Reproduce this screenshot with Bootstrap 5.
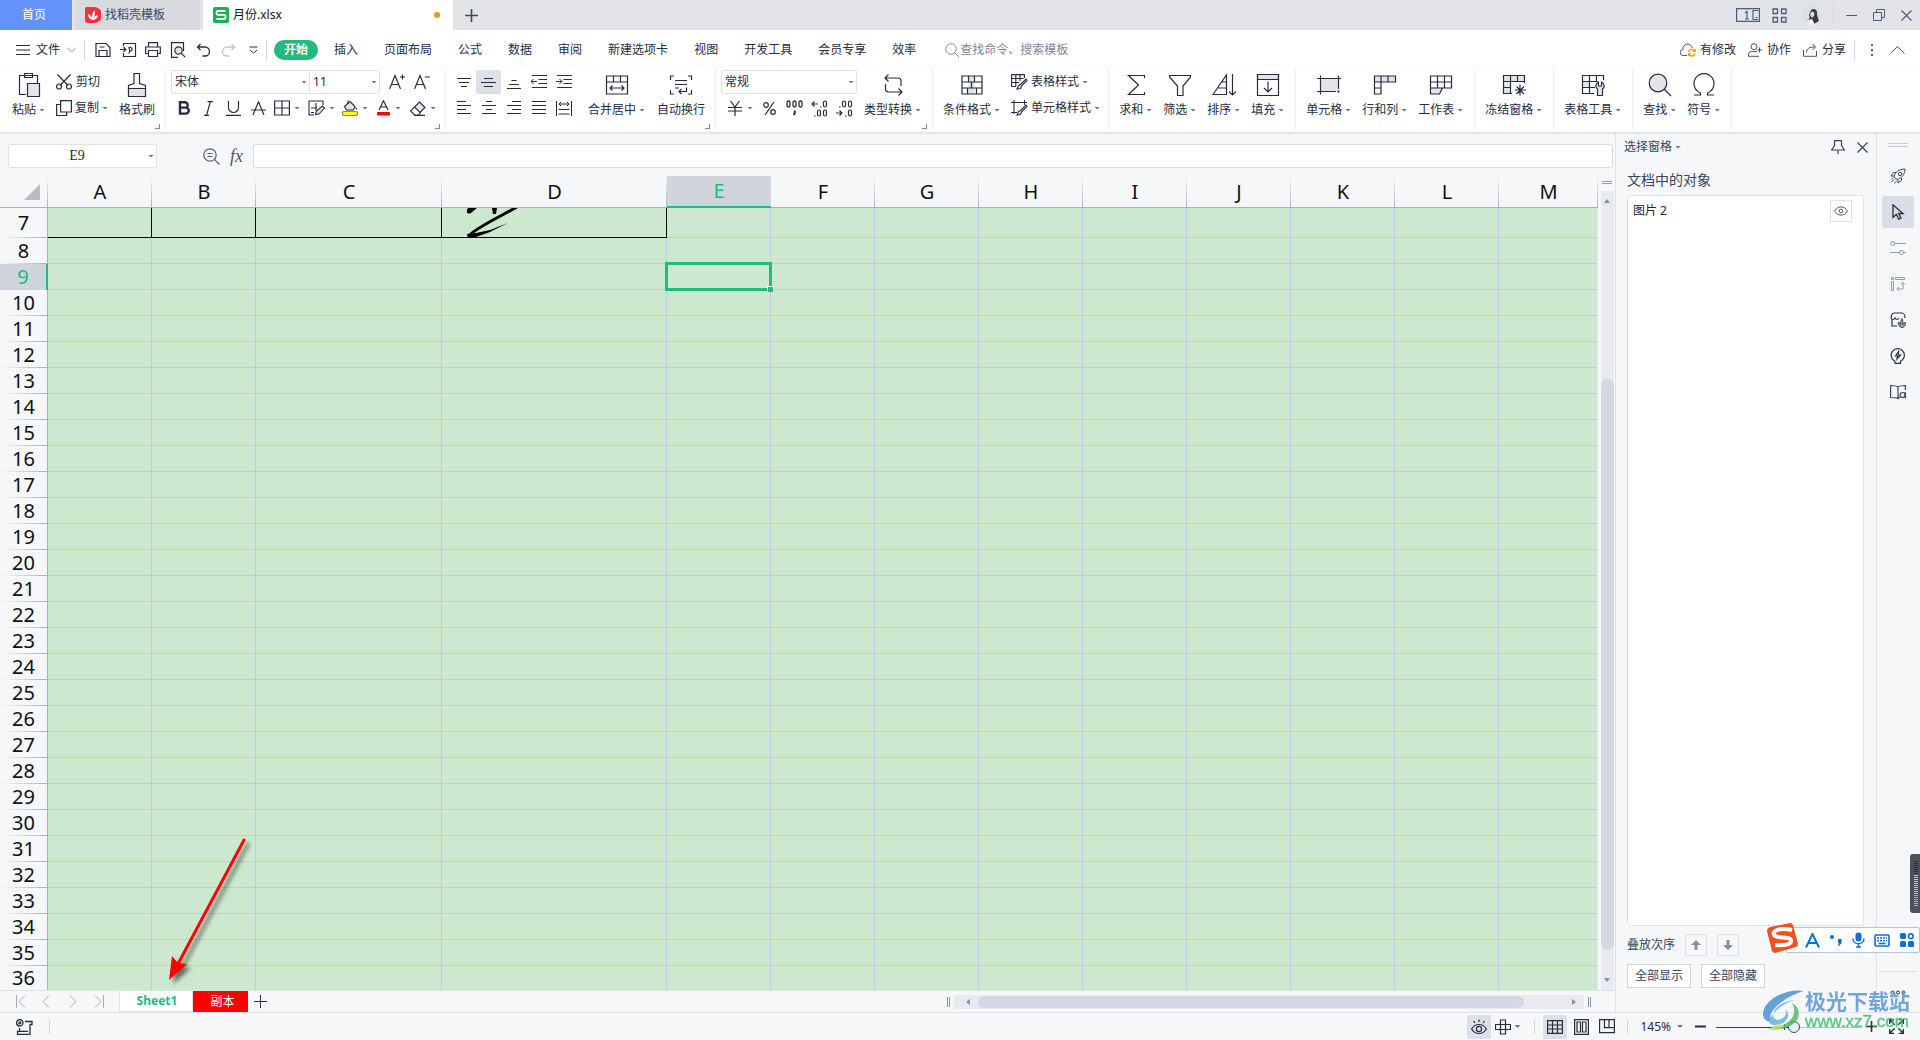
<!DOCTYPE html>
<html lang="zh-CN">
<head>
<meta charset="utf-8">
<meta name="viewport" content="width=device-width, initial-scale=1">
<title>月份.xlsx</title>
<link href="https://cdn.jsdelivr.net/npm/bootstrap@5.3.0/dist/css/bootstrap.min.css" rel="stylesheet">
<style>
:root{--ink:#262d40;--line:#e0e2e8;--bg:#f5f7f9;--green:#21bb7e;--head:#d1d4dc;--rule:#a9b0c6}
html{height:100%;overflow:hidden}
body{font:12px/16px "Noto Sans","Noto Sans CJK SC",sans-serif;color:var(--ink);background:var(--bg);height:100%;overflow:hidden}
button,select,input{font:inherit;color:inherit}
button{border:0;background:none;padding:0;display:flex;align-items:center;white-space:nowrap}
svg{display:block;flex:none}
svg:not([stroke]){stroke:currentColor}
svg:not([fill]){fill:none}
.tri{flex:none;width:6px;height:3px;background:#6b7691;clip-path:polygon(0 0,100% 0,50% 100%)}
/* title bar */
.titlebar{height:30px;flex:none;background:#e2e4e8}
.wtab{height:30px;color:#3f485c}
.wtab-home{width:72px;background:#6492fb;color:#fff;justify-content:center;padding-right:4px}
.wtab-tpl{width:125px;background:#d8dade;padding-left:10px;gap:4px;margin:0 3px}
.wtab-doc{width:250px;background:#fff;padding:0 13px 0 10px;gap:4px;color:#111}
.dirty{width:6px;height:6px;border-radius:50%;background:#e79b08}
.winbtns{color:#4d5c7d}
.avatar-dot{width:20px;height:20px;border-radius:50%;overflow:hidden;margin:0 8px 0 14px}
.vsep{width:1px;height:20px;background:#d3d6dc;flex:none}
/* menu */
.menubar{height:37px;flex:none;background:#fff;padding:3px 15px 0 16px}
.filebtn{gap:6px}
.quick{gap:9px;margin:0 5px 0 10px}
.quick button{width:16px;justify-content:center}
.mtab{padding:0 13px;height:20px}
.mtab.on{background:var(--green);color:#fff;font-weight:700;border-radius:10px;padding:0 10px;margin:0 3px}
.finder{border:0;outline:0;background:none;width:140px;padding:0}
.finder::placeholder{color:#7a869f;opacity:1}
/* ribbon */
.ribbon{background:#fff;height:65px;flex:none;padding-top:1px;box-shadow:0 1px 3px #0002;z-index:2}
.rgroup{height:62px;border-right:1px solid #eceef1;padding:2px 11px 0 10px;gap:11px}
.g-clip{padding-left:12px;padding-right:10px}
.g-font{padding-left:5px;padding-right:4px}
.g-align{padding-left:5px;padding-right:10px;gap:12px}
.g-number{padding-left:5px;gap:7px}
.bigbtn{flex-direction:column;padding-top:3px;gap:5px}
.cap{gap:3px}
.rrow{height:24px}
.rrow + .rrow,.pick + .rrow{margin-top:2px}
.tool{width:25px;height:24px;justify-content:center;border-radius:2px}
.tool.on{background:#dde1e7}
.dtool{width:34px;height:24px;padding-left:3px;gap:4px}
.money{width:36px;padding-left:7px;gap:5px}
.corner{position:absolute;right:5px;bottom:1px;width:5px;height:5px;border:solid #7f889c;border-width:0 1px 1px 0}
.pick{height:24px;border:1px solid #dfe1e6;border-radius:2px;background:#fff}
.pick select,.pick input{border:0;outline:0;appearance:none;background:none;padding:0 3px;width:100%;height:22px}
.pick .tri{margin:0 2px 0 -8px}
.fontname{width:139px;border-radius:2px 0 0 2px}
.fontsize{width:71px;border-radius:0 2px 2px 0;margin-left:-1px}
/* formula bar */
.fbar{height:44px;flex:none;padding:0 2px 0 8px}
.namebox{width:149px;margin-right:46px}
.namebox input{font-family:"Liberation Serif",serif;font-size:14px;text-align:center;padding-right:14px}
.formula{height:24px;border:1px solid #d9dce2;border-radius:2px;background:#fff;outline:0}
.fxi{font:italic 18px/20px "Liberation Serif",serif;color:#4c566c;width:23px;margin-left:10px}
/* grid */
.gridbox{min-height:0;overflow:hidden}
.cells{table-layout:fixed;border-collapse:separate;border-spacing:0;width:100%}
.cells td{background:#cce8cf;border:solid #c3cadb;border-width:0 1px 1px 0;padding:0;height:26px}
.cells tr.tall td,.cells tr.tall th{height:30px}
.cells th{font-size:20px;line-height:24px;font-weight:400;text-align:center;color:#111;padding:0}
.cells thead th{height:32px;border-bottom:1px solid var(--rule);background:linear-gradient(#0000,var(--rule)) right/1px 100% no-repeat}
.cells tbody th{height:26px;border-right:1px solid var(--rule);background:linear-gradient(90deg,#0000,var(--rule)) bottom/100% 1px no-repeat}
.cells thead th.cur{background:var(--head);color:var(--green);border-bottom:2px solid var(--green)}
.cells tbody th.cur{background:var(--head);color:var(--green);border-right:2px solid var(--green)}
.cells tbody tr:last-child>*{height:24px;border-bottom:0}
.cells tbody tr:last-child th{background:none}
.cells td.boxed{border-color:#000}
.cells td.pic{position:relative}
.pic svg{position:absolute;left:22px;top:0}
.cells td.sel{position:relative}
.sel::before{content:"";position:absolute;inset:-2px;border:3px solid var(--green)}
.sel::after{content:"";position:absolute;right:-3px;bottom:-3px;width:6px;height:6px;background:var(--green);border:solid #fff;border-width:1px 0 0 1px}
.cells td:last-child,.cells thead th:last-child{border-right-color:#e3e5ea}
.vbar{width:17px;flex:none;padding:5px 1px 0 3px}
.track{background:#e9eaf0}
.thumb{background:#d5d8e0;border-radius:7px}
.grip{height:3px;border:solid #98a2b4;border-width:1px 0}
.vgrip{width:10px;flex:none;align-self:center;margin-bottom:7px}
.grip2{width:3px;height:10px;border:solid #8a95aa;border-width:0 1px}
/* sheet tabs */
.tabsbar{height:22px;flex:none;border-top:1px solid var(--line);padding-right:24px}
.navs{width:119px;padding-left:16px;gap:16px;color:#a9adb8}
.stab{height:21px;justify-content:center}
.stab.on{width:74px;background:#fff;color:var(--green);font-weight:700;border:solid var(--line);border-width:0 1px 1px;padding-left:2px}
.stab.red{width:55px;background:#f00;color:#fff;padding-left:4px}
/* task pane */
.pane{width:261px;flex:none;border-left:1px solid var(--line);padding:0 12px 0 11px;color:#39435a}
.panetop{margin:0 -4px 0 -3px;padding-top:7px}
.panecap{font-size:14px;line-height:20px;margin:15px 0 5px}
.objs{border:1px solid #dfe1e7;border-radius:3px;background:#fff;color:#20242e}
.objrow{padding:4px 11px 0 5px}
.sq{border:1px solid #dfe1e7;justify-content:center;width:22px;height:22px}
.order{gap:10px}
.paneact{height:24px;border:1px solid #cfd3da;background:#fff;padding:0 7px}
.rail{width:44px;flex:none;border-left:1px solid var(--line);gap:4px;color:#3b4866}
.railgrip{width:20px;height:4px;border-color:#c9ccd3;margin:11px 0 9px}
.rail button{width:32px;height:32px;justify-content:center;border-radius:2px}
.rail .on{background:#d9dde5;color:var(--ink)}
/* status */
.statusbar{height:28px;flex:none;border-top:1px solid var(--line);padding-right:16px}
.statusbar .vsep{height:14px}
.views{gap:2px;margin:0 8px}
.sbtn{width:24px;height:24px;justify-content:center;border-radius:2px}
.sbtn.on{background:#dbdfe6}
.crossbtn{margin:0 14px 0 4px}
.zoomval{gap:6px}
.zoomer{appearance:none;width:146px;height:12px;margin:0 0 0 10px;background:linear-gradient(#333c50,#333c50) 68px 3px/1px 6px no-repeat,linear-gradient(90deg,#333c50 78px,#bcc3cb 78px) 0 6px/100% 1px no-repeat}
.zoomer::-webkit-slider-thumb{appearance:none;width:12px;height:12px;border:1px solid #444c5c;border-radius:50%;background:#eceef1}
/* floating */
.arrow{position:absolute;left:160px;bottom:49px;filter:drop-shadow(4px 4px 2px #0008)}
.meter{position:absolute;right:0;bottom:127px;z-index:5}
.ime{position:absolute;right:0;bottom:87px;height:26px;width:134px;background:#fff;border:1px solid #a9c4e8;border-radius:2px;padding:0 5px 0 18px;color:#0a6fdc;z-index:5}
.imelogo{position:absolute;left:-21px;top:-6px}
.site{position:absolute;right:10px;bottom:8px;z-index:5;pointer-events:none;font-family:"Noto Sans CJK SC",sans-serif;opacity:.85}
.site-cn{font-size:21px;line-height:24px;font-weight:700;color:#5b97d8}
.site-url{font:500 17px/20px "Liberation Sans",sans-serif;color:#3fbf6b;-webkit-text-stroke:.4px #3fbf6b}
</style>
<script src="https://cdn.jsdelivr.net/npm/bootstrap@5.3.0/dist/js/bootstrap.bundle.min.js"></script>
</head>
<body class="d-flex flex-column position-relative">

<header class="titlebar d-flex align-items-center">
  <button class="wtab wtab-home">首页</button>
  <button class="wtab wtab-tpl">
    <svg width="16" height="16" viewBox="0 0 16 16" stroke="none"><path fill="#f8303c" d="M1 0h8a7 7 0 0 1 0 16H3a3 3 0 0 1-3-3V1z"/><path fill="#fff" d="M7.500 13C4 12 3 9.500 3 7c2 .5 3.500 2.500 4 4 0-3 .5-5.500 2.500-8 1 2.500.5 5-.7 8 .8-1.500 2-2.600 4-3 0 2.600-2 5-5.300 5z"/></svg>找稻壳模板</button>
  <button class="wtab wtab-doc">
    <svg width="16" height="16" viewBox="0 0 16 16" stroke="none"><rect width="16" height="16" rx="2" fill="#17b253"/><path fill="none" stroke="#fff" stroke-width="1.800" d="M12.500 4H5a1.500 1.500 0 0 0-1.500 1.500v.8A1.500 1.500 0 0 0 5 7.800h6a1.500 1.500 0 0 1 1.500 1.500v1.200A1.500 1.500 0 0 1 11 12H3.500"/></svg>月份.xlsx<span class="dirty ms-auto"></span></button>
  <button class="ms-2 ps-1" aria-label="新建"><svg width="13" height="13" stroke="#3d4861" stroke-width="1.600"><path d="M6.500 0v13M0 6.500h13"/></svg></button>
  <div class="winbtns d-flex align-items-center ms-auto pe-2">
    <button aria-label="设备"><svg width="24" height="14" stroke-width="1.200"><path d="M.6.6h22.800v12.800H.6z"/><path d="M22 2.500h-5v9h5M19.500 9.500h2M9 5l2-1.500V11M9 11h4"/></svg></button>
    <button class="ms-2 ps-1" aria-label="应用"><svg width="15" height="15" stroke-width="1.300"><path d="M1 1h4.500v4.500H1zM9.500 1H14v4.500H9.500zM1 9.500h4.500V14H1zM9.500 9.500H14V14H9.500z"/></svg></button>
    <button class="avatar-dot" aria-label="账号"><svg width="20" height="20" stroke="none"><path fill="#d3e3e8" d="M0 0h20v20H0z"/><path fill="#3a3a46" d="M10 5c4-3 7 1 6 5l2 6-5 3-2-4-5 1c3-2 3-4 2-6z"/><path fill="#f0d5ca" d="M10 7c3-1 4 1 3 4l-2 2-2-3z"/><path fill="#f3f5f6" d="m7 15 4-1 3 6H6z"/></svg></button>
    <span class="vsep ms-1"></span>
    <button class="ms-2 ps-1" aria-label="最小化"><svg width="11" height="11"><path d="M0 5.500h11"/></svg></button>
    <button class="ms-3" aria-label="还原"><svg width="12" height="12"><path d="M.5 3.500h8v8h-8zM3.500 3V.5h8v8H9"/></svg></button>
    <button class="ms-3" aria-label="关闭"><svg width="11" height="11" stroke-width="1.200"><path d="m.5.5 10 10m0-10-10 10"/></svg></button>
  </div>
</header>

<nav class="menubar d-flex align-items-center">
  <button class="filebtn"><svg width="14" height="10"><path d="M0 .5h14M0 5h14M0 9.500h14"/></svg><span>文件</span><svg width="10" height="6" stroke="#8a90a0"><path d="m1 .5 4.500 4.500L10 .5"/></svg></button>
  <span class="vsep ms-2"></span>
  <div class="quick d-flex align-items-center">
    <button aria-label="保存"><svg width="16" height="16" stroke-width="1.200"><path d="M1 1.500h10l4 4v9H1zM4 14V8.500h8V14M4.500 5h5"/></svg></button>
    <button aria-label="输出"><svg width="17" height="16" stroke-width="1.200"><path d="M3.500 4V1.500h12v13h-12V11M0 7.500h5.500M3.500 5l2.300 2.500L3.500 10M8.500 11.500c2-1 1-4 .5-6a2 2 0 1 1 2 3.500H9"/></svg></button>
    <button aria-label="打印"><svg width="16" height="16" stroke-width="1.200"><path d="M3.500 5V.7h9V5M3.500 11.500h-2.800V5h14.600v6.500h-2.800M3.500 8.500h9v6h-9z"/></svg></button>
    <button aria-label="打印预览"><svg width="16" height="16" stroke-width="1.200"><path d="M8 15.300H1.500V.7h12V9"/><circle cx="8.500" cy="8.500" r="3.700" fill="#dfe1e6"/><path d="m11.200 11.200 4 4"/></svg></button>
    <button aria-label="撤销"><svg width="15" height="15" stroke-width="1.300"><path d="M4.500 1 1.500 4l3 3M1.500 4H9a4.500 4.500 0 0 1 0 9H6.500"/></svg></button>
    <button aria-label="恢复" disabled><svg width="15" height="15" stroke="#c2c5cc" stroke-width="1.300"><path d="m10.500 1 3 3-3 3M13.500 4H6a4.500 4.500 0 0 0 0 9h2.500"/></svg></button>
    <button aria-label="更多"><svg width="9" height="8"><path d="M.5 1h8M1 4l3.500 3L8 4"/></svg></button>
  </div>
  <span class="vsep me-1"></span>
  <div class="d-flex">
    <button class="mtab on">开始</button><button class="mtab">插入</button><button class="mtab">页面布局</button><button class="mtab">公式</button><button class="mtab">数据</button><button class="mtab">审阅</button><button class="mtab">新建选项卡</button><button class="mtab">视图</button><button class="mtab">开发工具</button><button class="mtab">会员专享</button><button class="mtab">效率</button>
  </div>
  <label class="d-flex align-items-center ms-3"><svg width="15" height="15" stroke="#8793ab"><circle cx="6" cy="6" r="5.300"/><path d="m10 10 4 4"/></svg><input class="finder" placeholder="查找命令、搜索模板"></label>
  <div class="d-flex align-items-center ms-auto">
    <button><svg class="me-1" width="16" height="14" stroke="#47536b"><path d="M7 12.500H3.500a3 3 0 0 1-.5-6A4.700 4.700 0 0 1 12.300 5"/><path stroke="#f2a41c" stroke-width="1.500" d="M8.500 9a3.300 3.300 0 0 1 6-1M15 6v2.500h-2.500M15 10.500a3.300 3.300 0 0 1-6 1M8.500 13v-2.200h2.300"/></svg>有修改</button>
    <button class="ms-2 ps-1"><svg class="me-1" width="15" height="14" stroke="#47536b"><circle cx="6" cy="3.700" r="3"/><path d="M9 8.500H3.500a3 3 0 0 0-3 3v1.800h10.500M11.500 4.500v5M9 7h5"/></svg>协作</button>
    <button class="ms-2 ps-1"><svg class="me-1" width="15" height="14" stroke="#47536b"><path d="M.5 7v6.300h13V8M3.500 9.500c0-4 3-5.500 8.500-5.500M9.500 1l3 3-3 3"/></svg>分享</button>
    <span class="vsep mx-2"></span>
    <button class="mx-2" aria-label="更多"><svg width="3" height="13" fill="#555e70" stroke="none"><path d="M0 0h2v2H0zM0 5h2v2H0zM0 10h2v2H0z"/></svg></button>
    <button class="ms-2" aria-label="折叠功能区"><svg width="15" height="8" stroke="#4b5468"><path d="m.5 7.500 7-7 7 7"/></svg></button>
  </div>
</nav>

<section class="ribbon d-flex position-relative">
  <div class="rgroup g-clip d-flex align-items-start position-relative">
    <button class="bigbtn"><svg width="24" height="24" stroke-width="1.200"><path d="M9 21.500H2.500v-19h18V10M7.500 4.500v-4h8v4z"/><path fill="#e2e4e9" d="M10.500 10.500h12v13h-12z"/></svg><span class="cap d-flex align-items-center">粘贴<i class="tri"></i></span></button>
    <div>
      <button class="rrow"><svg class="me-1" width="16" height="16" stroke-width="1.200"><path d="M1.500.5 12 11.500M14.500.5 4 11.500"/><circle cx="3" cy="12.500" r="2.500"/><circle cx="13" cy="12.500" r="2.500"/></svg>剪切</button>
      <button class="rrow cap"><svg width="16" height="16" stroke-width="1.200"><path d="M4.500 4.500H.6v11h10V12"/><path d="M4.600.6h10.800v11.400H4.600z"/></svg>复制<i class="tri"></i></button>
    </div>
    <button class="bigbtn"><svg width="24" height="24" stroke-width="1.200"><path fill="#e2e4e9" d="M3.500 15.500h17v8h-17z"/><path d="M3.500 16v-3.500l5.500-2v-10h5.500v10l6 2V16"/></svg>格式刷</button>
    <span class="corner"></span>
  </div>
  <div class="rgroup g-font position-relative">
    <div class="rrow d-flex">
      <div class="pick fontname d-flex align-items-center"><select aria-label="字体"><option>宋体</option></select><i class="tri"></i></div>
      <div class="pick fontsize d-flex align-items-center me-1"><select aria-label="字号"><option>11</option></select><i class="tri"></i></div>
      <button class="tool" aria-label="增大字号"><svg width="16" height="16" stroke-width="1.200"><path d="M.5 15 6 1.500 11.500 15M2.500 10.500h7M13.500.5v5M11 3h5"/></svg></button>
      <button class="tool" aria-label="减小字号"><svg width="16" height="16" stroke-width="1.200"><path d="M.5 15 6 1.500 11.500 15M2.500 10.500h7M11 3h5"/></svg></button>
    </div>
    <div class="rrow d-flex">
      <button class="tool" aria-label="加粗"><svg width="12" height="14" stroke-width="2.400"><path d="M2 1.200h5a2.700 2.700 0 0 1 0 5.400H2zM2 6.600h5.800a3 3 0 0 1 0 6H2z"/></svg></button>
      <button class="tool" aria-label="倾斜"><svg width="9" height="15" stroke-width="1.200"><path d="M3.500.6H9M0 14.400h5M6.300.6 2.600 14.400"/></svg></button>
      <button class="tool" aria-label="下划线"><svg width="15" height="15" stroke-width="1.200"><path d="M2.500 0v6.500a5 5 0 0 0 10 0V0M0 14.400h15"/></svg></button>
      <button class="tool" aria-label="删除线"><svg width="15" height="15" stroke-width="1.200"><path d="M2 14 7.500.8 13 14M0 9h15"/></svg></button>
      <button class="dtool" aria-label="边框"><svg width="16" height="16" stroke-width="1.200"><path d="M.6 1h14.800v14H.6zM8 1v14M.6 8h14.800"/></svg><i class="tri"></i></button>
      <button class="dtool" aria-label="绘图边框"><svg width="17" height="16" stroke-width="1.100"><path d="M6 15H1V1h14v4M3 8h6M8 3v8M3 12.500h3"/><path fill="#e2e4e9" d="m7.500 14.500 1-3.500 6-5 2 2-5.500 6z"/></svg><i class="tri"></i></button>
      <button class="dtool" aria-label="填充颜色"><svg width="16" height="16" stroke-width="1.100"><path fill="#e2e4e9" d="m2.500 6.500 5.500-5 5 5-1.500 3.500h-7z"/><path d="M6 4V.5M13.500 7.500l1.500 2"/><rect x=".5" y="11.500" width="15" height="4" rx="1.500" fill="#ff0" stroke="#8b8c4a"/></svg><i class="tri"></i></button>
      <button class="dtool" aria-label="字体颜色"><svg width="15" height="16" stroke-width="1.200"><path d="M3 10 7.500.8 12 10M4.500 7h6"/><rect x="1" y="12" width="13" height="3.500" rx="1" fill="red" stroke="none"/></svg><i class="tri"></i></button>
      <button class="dtool" aria-label="清除"><svg width="16" height="15" stroke-width="1.100"><path fill="#e2e4e9" d="M9.500 1 15 6.500 10 11.500 4.500 6z"/><path d="m4.500 6-4 4 4 4h4l2-2.500M4 14.400h11"/></svg><i class="tri"></i></button>
    </div>
    <span class="corner"></span>
  </div>
  <div class="rgroup g-align d-flex align-items-start position-relative">
    <div>
      <div class="rrow d-flex">
        <button class="tool" aria-label="顶端对齐"><svg width="14" height="15"><path d="M0 3.500h14M2 7.500h10M4 11.500h6"/></svg></button>
        <button class="tool on" aria-label="垂直居中"><svg width="15" height="15"><path d="M3 3.500h9M0 7.500h15M3 11.500h9"/></svg></button>
        <button class="tool" aria-label="底端对齐"><svg width="14" height="15"><path d="M4.500 5.500h5M2 9.500h10M0 13.500h14"/></svg></button>
        <button class="tool" aria-label="减少缩进"><svg width="16" height="14"><path d="M1 .5h15M7.500 4.500H16M7.500 8.500H16M1 12.500h15M0 6.500h6M2.500 4 0 6.500 2.500 9"/></svg></button>
        <button class="tool" aria-label="增加缩进"><svg width="16" height="14"><path d="M1 .5h15M7.500 4.500H16M7.500 8.500H16M1 12.500h15M0 6.500h6M3.500 4 6 6.500 3.500 9"/></svg></button>
      </div>
      <div class="rrow d-flex">
        <button class="tool" aria-label="左对齐"><svg width="14" height="14"><path d="M0 .5h9M0 4.500h14M0 8.500h9M0 12.500h14"/></svg></button>
        <button class="tool" aria-label="居中对齐"><svg width="14" height="14"><path d="M4 .5h6M0 4.500h14M4 8.500h6M0 12.500h14"/></svg></button>
        <button class="tool" aria-label="右对齐"><svg width="14" height="14"><path d="M5 .5h9M0 4.500h14M5 8.500h9M0 12.500h14"/></svg></button>
        <button class="tool" aria-label="两端对齐"><svg width="14" height="14"><path d="M0 .5h14M0 4.500h14M0 8.500h14M0 12.500h14"/></svg></button>
        <button class="tool" aria-label="分散对齐"><svg width="16" height="15"><path d="M.5 0v15M15.500 0v15M2.500 8.500h11M2.500 13h11M3 3h10M5 1 3 3l2 2M11 1l2 2-2 2"/></svg></button>
      </div>
    </div>
    <button class="bigbtn"><svg width="24" height="24" stroke-width="1.200"><path d="M1.500 3h21v18h-21zM1.500 9h21M8.500 3v6M15.500 3v6M5 15h14M7.500 12.500 5 15l2.500 2.500M16.500 12.500 19 15l-2.500 2.500"/></svg><span class="cap d-flex align-items-center">合并居中<i class="tri"></i></span></button>
    <button class="bigbtn"><svg width="24" height="24" stroke-width="1.200"><path d="M5 3H1.500v4M19 3h3.500v4M5 21H1.500v-4M19 21h3.500v-4M6 7.500h12M6 11.500h12M6 15h4M17.500 14.500v4H10M12.500 16 10 18.500l2.500 2.500"/></svg>自动换行</button>
    <span class="corner"></span>
  </div>
  <div class="rgroup g-number d-flex align-items-start position-relative">
    <div>
      <div class="pick d-flex align-items-center"><select aria-label="数字格式"><option>常规</option></select><i class="tri"></i></div>
      <div class="rrow d-flex">
        <button class="dtool money" aria-label="货币"><svg width="14" height="15" stroke-width="1.200"><path d="m2.500 0 4.500 6 4.500-6M0 6.500h14M0 10h14M7 6v9"/></svg><i class="tri"></i></button>
        <button class="tool" aria-label="百分比"><svg width="13" height="13" stroke-width="1.200"><path d="M11 0 2 13"/><circle cx="3" cy="3" r="2.300"/><circle cx="10" cy="10" r="2.300"/></svg></button>
        <button class="tool" aria-label="千位分隔"><svg width="17" height="16" stroke-width="1.300"><rect x="1" y="1" width="3" height="6" rx="1.500"/><rect x="7" y="1" width="3" height="6" rx="1.500"/><rect x="13" y="1" width="3" height="6" rx="1.500"/><path stroke-width="2" d="M8.800 10.500v2.500l-1 2"/></svg></button>
        <button class="tool" aria-label="增加小数"><svg width="17" height="17" stroke-width="1.200"><path d="M1 4h6M3.500 1.500 1 4l2.500 2.500M9 7h1.500M3 16h1.500"/><rect x="12.500" y="1" width="3" height="6" rx="1.500"/><rect x="6.500" y="10" width="3" height="6" rx="1.500"/><rect x="12.500" y="10" width="3" height="6" rx="1.500"/></svg></button>
        <button class="tool" aria-label="减少小数"><svg width="17" height="17" stroke-width="1.200"><path d="M0 13h6M3.500 10.500 6 13l-2.500 2.500M3 7h1.500M9 16h1.500"/><rect x="6.500" y="1" width="3" height="6" rx="1.500"/><rect x="12.500" y="1" width="3" height="6" rx="1.500"/><rect x="12.500" y="10" width="3" height="6" rx="1.500"/></svg></button>
      </div>
    </div>
    <button class="bigbtn"><svg width="24" height="24" stroke-width="1.200"><path d="M7.500 1.500 4 5l3.500 3.500M4 5h13a3 3 0 0 1 3 3v5M4.500 11v5a3 3 0 0 0 3 3h13M17.500 15.500 21 19l-3.500 3.500"/></svg><span class="cap d-flex align-items-center">类型转换<i class="tri"></i></span></button>
    <span class="corner"></span>
  </div>
  <div class="rgroup d-flex align-items-start pe-2">
    <button class="bigbtn"><svg width="24" height="24" stroke-width="1.200"><path fill="#e2e4e9" d="M8.500 3h6v12h-6zM14.500 15v6h-7v-6z" stroke="none"/><path d="M2 3h20v18H2zM2 9h20M2 15h20M8.500 3v6M14.500 3v6M11.500 9v6M7.500 15v6M16.500 15v6"/></svg><span class="cap d-flex align-items-center">条件格式<i class="tri"></i></span></button>
    <div>
      <button class="rrow cap"><svg width="17" height="16" stroke-width="1.100"><path d="M5 12.500H.6V.6h12.800V4M.6 4.500h12M.6 8.500H8M4.800.6v12M9 .6V7"/><path fill="#e2e4e9" d="m6 15 1.500-3.500 2-1L15 5l1 1.500-5.500 5.500-1 2.500z"/></svg>表格样式<i class="tri"></i></button>
      <button class="rrow cap"><svg width="17" height="16" stroke-width="1.100"><path d="M0 2.500h16M3 0v14M0 12.500h6M13.500 0v5"/><path fill="#e2e4e9" d="m6 15 1.500-3.500 2-1L15 5l1 1.500-5.500 5.500-1 2.500z"/></svg>单元格样式<i class="tri"></i></button>
    </div>
  </div>
  <div class="rgroup d-flex align-items-start">
    <button class="bigbtn"><svg width="24" height="24" stroke-width="1.200"><path d="M20.500 5V2.500h-16l10 9.500-10 9.500h16V19"/></svg><span class="cap d-flex align-items-center">求和<i class="tri"></i></span></button>
    <button class="bigbtn"><svg width="24" height="24" stroke-width="1.200"><path d="M1.500 2.500h21V4L15 13v9.500H9.500V13L1.500 4z"/></svg><span class="cap d-flex align-items-center">筛选<i class="tri"></i></span></button>
    <button class="bigbtn"><svg width="24" height="24" stroke-width="1.200"><path d="M14.500 21.500H1L14.500 2zM5.500 15h9M10 9h4.500M20.500 1v21M17 18.500l3.500 3.500 3.500-3.500"/></svg><span class="cap d-flex align-items-center">排序<i class="tri"></i></span></button>
    <button class="bigbtn"><svg width="24" height="24" stroke-width="1.200"><path fill="#e2e4e9" d="M1.500 1.500h21v5h-21z"/><path d="M1.500 1.500h21v21h-21zM12 8.500V19M8 15l4 4 4-4"/></svg><span class="cap d-flex align-items-center">填充<i class="tri"></i></span></button>
  </div>
  <div class="rgroup d-flex align-items-start">
    <button class="bigbtn"><svg width="24" height="24" stroke-width="1.200"><path fill="#e2e4e9" stroke="none" d="M4 6h17v12H4z"/><path d="M0 5.500h24M3.500 2.500v19M21.500 2.500V16M0 18.500h19"/><path fill="currentColor" stroke="none" d="M20.500 17.500h2v2h-2z"/></svg><span class="cap d-flex align-items-center">单元格<i class="tri"></i></span></button>
    <button class="bigbtn"><svg width="24" height="24" stroke-width="1.200"><path fill="#e2e4e9" stroke="none" d="M1 3h22v6H1z"/><path d="M1.500 3h21v6h-21zM1.500 3v18H8V3M1.500 15H8M15 3v6"/></svg><span class="cap d-flex align-items-center">行和列<i class="tri"></i></span></button>
    <button class="bigbtn"><svg width="24" height="24" stroke-width="1.200"><path fill="#e2e4e9" stroke="none" d="M2 15h11l-3 6H2z"/><path d="M1.500 3h21v12h-21zM1.500 9h21M8.500 3v12M15.500 3v12M1.500 15v6h9l3-6"/></svg><span class="cap d-flex align-items-center">工作表<i class="tri"></i></span></button>
  </div>
  <div class="rgroup d-flex align-items-start">
    <button class="bigbtn"><svg width="24" height="24" stroke-width="1.200"><path fill="#e2e4e9" stroke="none" d="M1 3h22v6H8v12H1z"/><path d="M10 20.500H1.500V2.500h21V10M1.500 8.500h21M1.500 14.500H8M8.500 2.500v18M15.500 2.500v6M18 11.500v11M13 17h11M14.500 13.500l7.500 7.500M22 13.500 14.500 21"/></svg><span class="cap d-flex align-items-center">冻结窗格<i class="tri"></i></span></button>
  </div>
  <div class="rgroup d-flex align-items-start">
    <button class="bigbtn"><svg width="24" height="24" stroke-width="1.200"><path fill="#e2e4e9" stroke="none" d="M1 8.500h7v6H1z"/><path d="M13 20.500H1.500V2.500h21V7M1.500 8.500h15M1.500 14.500H14M8.500 2.500v18M15.500 2.500v6"/><path fill="#e2e4e9" d="M17.500 9v4h3V9c3 1 3.500 5.500 1 7v6.500h-5V16c-2.500-1.500-2-6 1-7z"/></svg><span class="cap d-flex align-items-center">表格工具<i class="tri"></i></span></button>
  </div>
  <div class="rgroup d-flex align-items-start">
    <button class="bigbtn"><svg width="24" height="24" stroke-width="1.200"><circle cx="10" cy="10" r="8.800" fill="#e2e4e9"/><path d="m16 16 7 7"/></svg><span class="cap d-flex align-items-center">查找<i class="tri"></i></span></button>
    <button class="bigbtn"><svg width="24" height="24" stroke-width="1.200"><path d="M2 22h6.500v-2A10 10 0 1 1 15.500 20v2H22"/></svg><span class="cap d-flex align-items-center">符号<i class="tri"></i></span></button>
  </div>
</section>

<main class="d-flex" style="flex:1 1 0;min-height:0">
  <div class="flex-fill d-flex flex-column" style="min-width:0">
    <div class="fbar d-flex align-items-center pt-1">
      <div class="pick namebox d-flex align-items-center"><input aria-label="名称框" value="E9"><i class="tri"></i></div>
      <button aria-label="缩放"><svg width="17" height="17" stroke="#55607a" stroke-width="1.200"><circle cx="7" cy="7" r="6.200"/><path d="m11.500 11.500 5 5M4.500 5.500h5M4.500 8.500h5"/></svg></button>
      <button class="fxi" aria-label="插入函数">fx</button>
      <input class="formula flex-fill" aria-label="编辑栏">
    </div>
    <div class="flex-fill d-flex gridbox">
      <div class="flex-fill gridbox" style="min-width:0">
        <table class="cells">
          <colgroup><col style="width:48px"><col style="width:104px"><col style="width:104px"><col style="width:186px"><col style="width:225px"><col style="width:104px"><col style="width:104px"><col style="width:104px"><col style="width:104px"><col style="width:104px"><col style="width:104px"><col style="width:104px"><col style="width:104px"><col></colgroup>
          <thead><tr><th aria-label="全选"><svg class="ms-4" width="16" height="16" stroke="none"><path fill="#b9bbbf" d="M16 0v16H0z"/></svg></th><th>A</th><th>B</th><th>C</th><th>D</th><th class="cur">E</th><th>F</th><th>G</th><th>H</th><th>I</th><th>J</th><th>K</th><th>L</th><th>M</th></tr></thead>
          <tbody id="rows"></tbody>
        </table>
      </div>
      <div class="vbar d-flex flex-column">
        <div class="grip vgrip"></div>
        <div class="track flex-fill d-flex flex-column align-items-center pb-2">
          <svg class="mt-2" width="6" height="4" fill="#8291ad" stroke="none"><path d="m3 0 3 4H0z"/></svg>
          <div style="flex:176"></div>
          <div class="thumb w-100" style="flex:571"></div>
          <div style="flex:28"></div>
          <svg width="6" height="4" fill="#8291ad" stroke="none"><path d="M0 0h6L3 4z"/></svg>
        </div>
      </div>
    </div>
    <div class="tabsbar d-flex align-items-center">
      <div class="navs d-flex">
        <button aria-label="首个"><svg width="10" height="13"><path d="M.5 0v13M9 .5l-6 6 6 6"/></svg></button>
        <button aria-label="上一个"><svg width="10" height="13"><path d="m7 .5-6 6 6 6"/></svg></button>
        <button aria-label="下一个"><svg width="10" height="13"><path d="m2 .5 6 6-6 6"/></svg></button>
        <button aria-label="末个"><svg width="10" height="13"><path d="M9.500 0v13M1 .5l6 6-6 6"/></svg></button>
      </div>
      <button class="stab on">Sheet1</button><button class="stab red">副本</button>
      <button class="ms-1" aria-label="新建工作表"><svg width="17" height="13"><path d="M8.500 0v13M2 6.500h13"/></svg></button>
      <div class="ms-auto d-flex align-items-center" style="width:40.5%">
        <span class="grip2 me-1"></span>
        <div class="track flex-fill d-flex align-items-center px-2" style="height:14px">
          <svg class="ms-1" width="4" height="6" fill="#8291ad" stroke="none"><path d="M4 0v6L0 3z"/></svg>
          <div style="flex:8"></div><div class="thumb" style="flex:547;height:12px"></div><div style="flex:48"></div>
          <svg width="4" height="6" fill="#8291ad" stroke="none"><path d="M0 0v6l4-3z"/></svg>
        </div>
        <span class="grip2 ms-1"></span>
      </div>
    </div>
  </div>

  <aside class="pane d-flex flex-column">
    <div class="panetop d-flex align-items-center">
      <button class="cap">选择窗格<i class="tri"></i></button>
      <button class="ms-auto" aria-label="固定"><svg width="14" height="14" stroke-width="1.200"><path d="M3.500.6h7v5l3 4.400H.6l3-4.400zM7 10v4"/></svg></button>
      <button class="ms-2 ps-1" aria-label="关闭"><svg width="11" height="11" stroke-width="1.200"><path d="m.5.5 10 10m0-10-10 10"/></svg></button>
    </div>
    <div class="panecap">文档中的对象</div>
    <div class="objs flex-fill">
      <div class="objrow d-flex align-items-center justify-content-between">图片 2<button class="sq" aria-label="显示隐藏"><svg width="14" height="10" stroke="#555a66"><path d="M.5 5C4-.5 10-.5 13.500 5 10 10.500 4 10.500.5 5z"/><circle cx="7" cy="5" r="1.800"/></svg></button></div>
    </div>
    <div class="order d-flex align-items-center pt-2">叠放次序
      <button class="sq" aria-label="上移"><svg width="10" height="10" fill="#8590a6" stroke="none"><path d="m5 0 5 5H6.500v5h-3V5H0z"/></svg></button>
      <button class="sq" aria-label="下移"><svg width="10" height="10" fill="#8590a6" stroke="none"><path d="m5 10 5-5H6.500V0h-3v5H0z"/></svg></button>
    </div>
    <div class="order d-flex pt-2 pb-4"><button class="paneact">全部显示</button><button class="paneact">全部隐藏</button></div>
  </aside>

  <aside class="rail d-flex flex-column align-items-center">
    <span class="grip railgrip"></span>
    <button aria-label="快捷"><svg width="16" height="16"><path d="M4 9C5 4 9 1 15 1c0 5-3 9-8 10.500zM4 8H1l2.500-3.500H6M8 12v3l3.500-2.500V10M4.500 11 1.500 14M3 9.500l-2 2M6.500 13l-2 2.500"/><circle cx="10" cy="6" r="1.700"/></svg></button>
    <button class="on" aria-label="选择"><svg width="14" height="16" stroke-width="1.300"><path d="M2 .8v12.500l3.500-2.800 2.300 4.800 2.200-1.200-2.300-4.600H12z"/></svg></button>
    <button aria-label="属性"><svg width="16" height="16" stroke="#8f9ab0"><path d="M5 3.500h11M0 12.500h9M14 12.500h2"/><circle cx="2.500" cy="3.500" r="2"/><circle cx="11.500" cy="12.500" r="2"/></svg></button>
    <button aria-label="样式"><svg width="16" height="16" stroke="#8f9ab0"><path d="M1.500 1.500h2v2h-2zM5.500 1.500h9v2h-9zM1.500 5.500h2v9h-2zM13 6.500v6.500H7M11 8.500l2-2 2 2M9 11l-2 2 2 2"/></svg></button>
    <button aria-label="商店"><svg width="16" height="16" stroke-width="1.200" stroke="#2a3145"><path d="M2 7v7h5M1 6c0-2 1-5 3-5h8c2 0 3 3 3 5M1 6c1 2 3 2 4 0 1 2 3 2 4 0"/><path stroke-width=".8" fill="#9aa0ad" d="M8 10.500c1.500 0 2 .5 2.500 2 0-2 0-4 1.500-6 1 2 1 4 .8 6 .5-1.500 1.500-2 2.700-2 0 3-1.500 5-3.500 5s-4-2-4-5z"/></svg></button>
    <button aria-label="灵感"><svg width="16" height="16" stroke-width="1.200" stroke="#2a3145"><path d="M5 15.300h5.500v-2a6.600 6.600 0 1 0-5.500 0zM8.500 3.500l-3 4.500h2L7 11l3.500-4H8.300z"/></svg></button>
    <button aria-label="学习"><svg width="16" height="16" stroke-width="1.200"><path d="M8 3C6 1.500 3 1.500.6 1.500v12c2.400 0 5.400 0 7.400 1V3c2-1.500 5-1.500 7.400-1.500V6M8 14.500l2-1M15.500 8v6.500"/><circle cx="12.500" cy="11" r="2.500"/></svg></button>
    <span class="mt-auto" style="width:38px;border-top:1px solid #dfe1e6"></span>
    <button class="mb-1" aria-label="更多"><svg width="16" height="5" stroke="#2a3145"><circle cx="2.500" cy="2.500" r="1.500"/><circle cx="8" cy="2.500" r="1.500"/><circle cx="13.500" cy="2.500" r="1.500"/></svg></button>
  </aside>
</main>

<footer class="statusbar d-flex align-items-center">
  <button class="ms-3" aria-label="宏"><svg width="17" height="16" stroke-width="1.300"><circle cx="3.800" cy="3.800" r="3.200"/><circle cx="3.800" cy="3.800" r="1"/><path d="M9 2.500h7v3h-2v9.800H1.500v-3H12M3.500 12V9"/></svg></button>
  <span class="vsep ms-3"></span>
  <div class="ms-auto d-flex align-items-center">
    <button class="sbtn on" aria-label="护眼模式"><svg width="16" height="16" stroke-width="1.200"><path d="M.6 10C4 4 12 4 15.400 10 12 16 4 16 .6 10zM8 .5V3M2.500 2 4 4M13.500 2 12 4"/><circle cx="8" cy="10" r="2.600"/></svg></button>
    <button class="cap crossbtn" aria-label="十字光标"><svg width="16" height="16" stroke-width="1.200"><path d="M5.500 1h5v4.500h5v5h-5V15h-5v-4.500h-5v-5h5zM5.500 5.500h5v5h-5z"/></svg><i class="tri"></i></button>
    <span class="vsep"></span>
    <div class="views d-flex">
      <button class="sbtn on" aria-label="普通视图"><svg width="16" height="14" stroke-width="1.200"><path d="M.6.6h14.800v12.800H.6zM.6 5h14.800M.6 9h14.800M5.500.6v13M10.500.6v13"/></svg></button>
      <button class="sbtn" aria-label="页面布局"><svg width="15" height="16" stroke-width="1.200"><path d="M.6.6h13.800v14.800H.6zM3 3h3.500v10H3zM8.500 3H12v10H8.500z"/></svg></button>
      <button class="sbtn" aria-label="分页预览"><svg width="16" height="15" stroke-width="1.200"><path d="M.6.6h14.800v13H.6zM5.500.6v8h4.500v-8M10 8.600h5"/></svg></button>
    </div>
    <span class="vsep"></span>
    <button class="zoomval ms-2 ps-1">145%<i class="tri"></i></button>
    <button class="ms-2 ps-1" aria-label="缩小"><svg width="11" height="3" stroke-width="2"><path d="M0 1.500h11"/></svg></button>
    <input class="zoomer" type="range" min="0" max="100" value="54" aria-label="显示比例">
    <button class="ms-1" aria-label="放大"><svg width="11" height="11" stroke-width="1.600"><path d="M5.500 0v11M0 5.500h11"/></svg></button>
    <button class="ms-2 ps-1" aria-label="全屏"><svg width="15" height="15" stroke-width="1.300"><path d="M.7 5V.7H5M10 .7h4.300V5M14.300 10v4.300H10M5 14.300H.7V10M.7.7l5 5M14.300.7l-5 5M14.300 14.300l-5-5M.7 14.300l5-5"/></svg></button>
  </div>
</footer>

<svg class="arrow" width="90" height="155" stroke="none"><path stroke="red" stroke-width="3" stroke-linecap="round" d="M84 4 18 128"/><path fill="red" d="M9 144l3-24 6 7 9 1z"/></svg>

<svg class="meter" width="10" height="59" stroke="none"><rect width="14" height="59" rx="3" fill="#4d505d"/><g stroke-width="4"><path stroke="#2c2e38" stroke-dasharray="1 1" d="M6 7v14"/><path stroke="#e0cf60" stroke-dasharray="1 1" d="M6 21v10"/><path stroke="#9ddb80" stroke-dasharray="1 1" d="M6 31v10"/><path stroke="#5fd3b8" stroke-dasharray="1 1" d="M6 41v12"/></g></svg>

<div class="ime d-flex align-items-center justify-content-between">
  <svg class="imelogo" width="32" height="32" stroke="none"><path fill="#f1501f" d="M4 5 24 1q2 0 3 2l5 19q0 2-2 3L9 31q-2 0-3-2L1 9q0-3 3-4z"/><path fill="none" stroke="#fff" stroke-width="4" d="M26 8C13 5 6 9 8 13s16 1 17 5-5 6-16 5"/></svg>
  <svg width="15" height="15" stroke-width="2"><path d="M1 14.500 7.500 1 14 14.500M3.500 10h8"/></svg>
  <svg width="12" height="12" stroke="none" fill="#0a6fdc"><circle cx="2" cy="3" r="2"/><path d="M8 5h3.500v4L9 12H8l1-3H8z"/></svg>
  <svg width="13" height="16" stroke-width="1.500"><rect x="3.500" y=".5" width="6" height="9" rx="3" fill="#0a6fdc" stroke="none"/><path d="M1 6.500c0 7 11 7 11 0M6.500 12v3M4 15h5"/></svg>
  <svg width="16" height="13" stroke-width="1.600"><rect x="1" y="1" width="14" height="11" rx="1"/><path d="M3 4h10M3 6.700h10" stroke-dasharray="2 1"/><path d="M4.500 9.500h7"/></svg>
  <svg width="14" height="14" stroke="none" fill="#0a6fdc"><rect width="6" height="6" rx="1.500"/><rect y="8" width="6" height="6" rx="1.500"/><rect x="8" y="8" width="6" height="6" rx="1.500"/><circle cx="10.800" cy="3.200" r="2.300" stroke="#0a6fdc" stroke-width="1.600" fill="none"/></svg>
</div>

<div class="site d-flex align-items-center">
  <svg width="44" height="42" stroke="none"><path fill="#4b92d4" d="M43 2C28-1 8 8 3 20c-4 10 4 14 10 13-5-3-5-8 1-14C20 12 32 5 43 2z"/><path fill="#64b5e4" d="M34 11c-12 1-22 8-22 15 0 4 4 6 8 4 5-2 6-6 4-9 5 2 4 9-2 13-6 3-12 3-14-1 2-9 14-19 26-22z"/><path fill="#55b96a" d="M31 14c6 3 9 10 5 17-5 7-16 11-29 9 12-2 20-5 24-11 3-5 3-10 0-15z"/><path fill="#cfdf5f" d="M7 40c6-3 9-5 12-5l4 3c-5 2-10 3-16 2z"/></svg>
  <div><div class="site-cn">极光下载站</div><div class="site-url">www.xz7.com</div></div>
</div>

<script>
// Rows 7-36 of the sheet; A7:D7 is the last row of the bordered table, E9 the active cell.
const body = document.getElementById('rows');
for (let r = 7; r <= 36; r++) {
  const tr = body.insertRow();
  if (r === 7) tr.className = 'tall';
  const th = document.createElement('th');
  th.textContent = r;
  if (r === 9) th.className = 'cur';
  tr.append(th);
  for (let c = 1; c <= 13; c++) {
    const td = tr.insertCell();
    if (r === 7 && c <= 4) td.classList.add('boxed');
    if (r === 9 && c === 5) td.classList.add('sel');
    if (r === 7 && c === 4) {
      td.classList.add('pic');
      td.innerHTML = '<svg width="56" height="31" stroke="none"><path fill="#000" d="M4 0h9l-6 5q-5 2-4-3zM28 0h5l-1 6h-3z"/><path stroke="#000" stroke-width="3" stroke-linejoin="round" d="M53-1C35 9 8 22 5 28"/><path fill="#000" d="M4 30 3 26l9-1 14-3 18-7-18 9-14 5z"/></svg>';
    }
  }
}
</script>
</body>
</html>
